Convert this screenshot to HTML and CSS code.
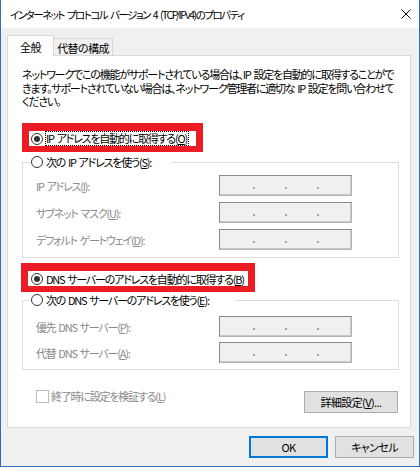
FILE: index.html
```html
<!DOCTYPE html>
<html>
<head>
<meta charset="utf-8">
<title>インターネット プロトコル バージョン 4 (TCP/IPv4)のプロパティ</title>
<link rel="stylesheet" href="styles.css">
</head>
<body>
<div class="window">
    <div class="titlebar">
        <span class="title">インターネット プロトコル バージョン 4 (TCP/IPv4)のプロパティ</span>
        <svg class="close" width="10" height="10" viewBox="0 0 10 10">
            <path d="M0.5 0.5 L9.5 9.5 M9.5 0.5 L0.5 9.5" stroke="#000" stroke-width="1" fill="none"/>
        </svg>
    </div>
    <div class="client">
        <div class="tabs">
            <div class="tab tab-active">全般</div>
            <div class="tab tab-other">代替の構成</div>
        </div>
        <div class="panel">
            <p class="intro">ネットワークでこの機能がサポートされている場合は、IP 設定を自動的に取得することがで<br>きます。サポートされていない場合は、ネットワーク管理者に適切な IP 設定を問い合わせて<br>ください。</p>

            <div class="pick">
                <span class="radio on"></span>
                <span class="focus">IP アドレスを自動的に取得する(<u>O</u>)</span>
            </div>
            <fieldset class="group">
                <legend class="legend-ip"><span class="radio"></span><span class="legend-text">次の IP アドレスを使う(<u>S</u>):</span></legend>
                <div class="rows">
                    <span class="label">IP アドレス(<u>I</u>):</span>
                    <div class="ip"><span class="seg"></span><span class="dot"></span><span class="seg"></span><span class="dot"></span><span class="seg"></span><span class="dot"></span></div>
                    <span class="label">サブネット マスク(<u>U</u>):</span>
                    <div class="ip"><span class="seg"></span><span class="dot"></span><span class="seg"></span><span class="dot"></span><span class="seg"></span><span class="dot"></span></div>
                    <span class="label">デフォルト ゲートウェイ(<u>D</u>):</span>
                    <div class="ip"><span class="seg"></span><span class="dot"></span><span class="seg"></span><span class="dot"></span><span class="seg"></span><span class="dot"></span></div>
                </div>
            </fieldset>

            <div class="pick pick-dns">
                <span class="radio on"></span>
                <span class="pick-text">DNS サーバーのアドレスを自動的に取得する(<u>B</u>)</span>
            </div>
            <fieldset class="group group-dns">
                <legend class="legend-dns"><span class="radio"></span><span class="legend-text">次の DNS サーバーのアドレスを使う(<u>E</u>):</span></legend>
                <div class="rows rows-dns">
                    <span class="label">優先 DNS サーバー(<u>P</u>):</span>
                    <div class="ip"><span class="seg"></span><span class="dot"></span><span class="seg"></span><span class="dot"></span><span class="seg"></span><span class="dot"></span></div>
                    <span class="label">代替 DNS サーバー(<u>A</u>):</span>
                    <div class="ip"><span class="seg"></span><span class="dot"></span><span class="seg"></span><span class="dot"></span><span class="seg"></span><span class="dot"></span></div>
                </div>
            </fieldset>

            <div class="foot">
                <div class="check-row">
                    <span class="checkbox"></span>
                    <span>終了時に設定を検証する(<u>L</u>)</span>
                </div>
                <div class="btn btn-adv">詳細設定(<u>V</u>)...</div>
            </div>
        </div>
        <div class="actions">
            <div class="btn btn-main btn-default">OK</div>
            <div class="btn btn-main">キャンセル</div>
        </div>
    </div>
</div>
</body>
</html>
```

FILE: styles.css
```css
* {
    box-sizing: border-box;
}

body {
    margin: 0;
    background: #fff;
    color: #000;
    font-family: "Noto Sans CJK JP", "Noto Sans", sans-serif;
    font-size: 11px;
    letter-spacing: -1.2px;
    word-spacing: 1.5px;
    font-feature-settings: "palt";
}

u {
    text-underline-offset: 1px;
}

.window {
    width: 420px;
    height: 467px;
    border: 1px solid #2f6dc2;
    border-top: 0;
    background: #f0f0f0;
}

/* title bar */
.titlebar {
    height: 28px;
    background: #fff;
    display: flex;
    align-items: center;
    justify-content: space-between;
    padding: 1px 8px 0 9px;
}

.title {
    font-size: 10.5px;
    line-height: 16px;
    letter-spacing: -1.5px;
    word-spacing: 2px;
    white-space: nowrap;
}

.close {
    display: block;
    margin-top: -1px;
}

/* tabs */
.client {
    padding-top: 7px;
}

.tabs {
    display: flex;
    align-items: flex-end;
    height: 20px;
    margin-left: 6px;
}

.tab {
    border: 1px solid #d9d9d9;
    border-bottom: 0;
    display: flex;
    align-items: center;
    justify-content: center;
    line-height: 14px;
    letter-spacing: -0.6px;
    white-space: nowrap;
}

.tab-active {
    position: relative;
    z-index: 1;
    width: 47px;
    height: 21px;
    margin-bottom: -1px;
    padding-top: 1px;
    background: #fff;
}

.tab-other {
    width: 59px;
    height: 17px;
    border-left: 0;
    background: #f0f0f0;
    padding-top: 1px;
}

/* panel */
.panel {
    margin-left: 6px;
    width: 404px;
    height: 373px;
    border: 1px solid #d9d9d9;
    background: #fff;
    padding: 12px 11px 0 14px;
}

.intro {
    margin: 0;
    line-height: 13.5px;
    white-space: nowrap;
}

.pick {
    display: flex;
    align-items: center;
    width: 181px;
    height: 29px;
    margin-top: 14.5px;
    padding-left: 2px;
    border: solid #ed1c24;
    border-width: 8px 7px 6px 7px;
    background: #fff;
    white-space: nowrap;
}

.pick-dns {
    width: 234px;
    margin-top: 5px;
    margin-left: -1px;
    padding-left: 3px;
}

.pick-text {
    margin-left: 3px;
    line-height: 14px;
}

.focus {
    margin-left: 2px;
    border: 1px dotted #000;
    padding: 0 1px 0 0;
    line-height: 13px;
}

.radio {
    flex: none;
    width: 12px;
    height: 12px;
    border: 1px solid #333;
    border-radius: 50%;
    background: #fff;
    display: flex;
    align-items: center;
    justify-content: center;
}

.radio.on::after {
    content: "";
    width: 6px;
    height: 6px;
    border-radius: 50%;
    background: #333;
}

/* group boxes */
.group {
    width: 377px;
    min-width: 0;
    margin: 2px 0 0 0;
    padding: 0;
    border: 1px solid #dcdcdc;
}

.group-dns {
    margin-top: 0;
}

.group legend {
    display: flex;
    align-items: center;
    height: 16px;
    margin-left: 7px;
    padding: 0 0 0 1px;
    background: #fff;
    white-space: nowrap;
}

.legend-ip {
    width: 142px;
}

.legend-dns {
    width: 206px;
}

.legend-text {
    margin-left: 3px;
    line-height: 14px;
}

.rows {
    display: grid;
    grid-template-columns: 183px 133px;
    align-items: center;
    row-gap: 6px;
    padding: 5px 0 7px 13px;
}

.rows-dns {
    row-gap: 5px;
    padding: 8px 0 6px 13px;
}

.label {
    color: #8a8a8a;
    white-space: nowrap;
    line-height: 14px;
}

.ip {
    display: flex;
    align-items: center;
    height: 21px;
    padding-left: 3px;
    border: 1px solid #8a8a8a;
    border-right-color: #b4b4b4;
    border-bottom-color: #b4b4b4;
    background: #f0f0f0;
    box-shadow: inset -1px -1px 0 #c8c8c8;
}

.seg {
    width: 30px;
}

.dot {
    width: 2px;
    height: 2px;
    margin-top: 4px;
    background: #9aa6b8;
}

/* bottom of panel */
.foot {
    display: flex;
    align-items: flex-start;
    margin-top: 18px;
}

.check-row {
    display: flex;
    align-items: center;
    height: 16px;
    margin-left: 14px;
    color: #8a8a8a;
    white-space: nowrap;
}

.checkbox {
    width: 13px;
    height: 13px;
    margin-right: 2px;
    border: 1px solid #bcbcbc;
    background: #fff;
}

.btn {
    height: 22px;
    display: flex;
    align-items: center;
    justify-content: center;
    border: 1px solid #adadad;
    background: #e1e1e1;
    letter-spacing: -0.6px;
    white-space: nowrap;
}

.btn-adv {
    width: 94px;
    margin: 3px 1px 0 auto;
}

.actions {
    display: flex;
    justify-content: flex-end;
    gap: 7px;
    margin-top: 8px;
    padding-right: 5px;
}

.btn-main {
    width: 79px;
}

.btn-default {
    border-color: #0078d7;
    box-shadow: inset 0 0 0 1px #0078d7;
}
```
